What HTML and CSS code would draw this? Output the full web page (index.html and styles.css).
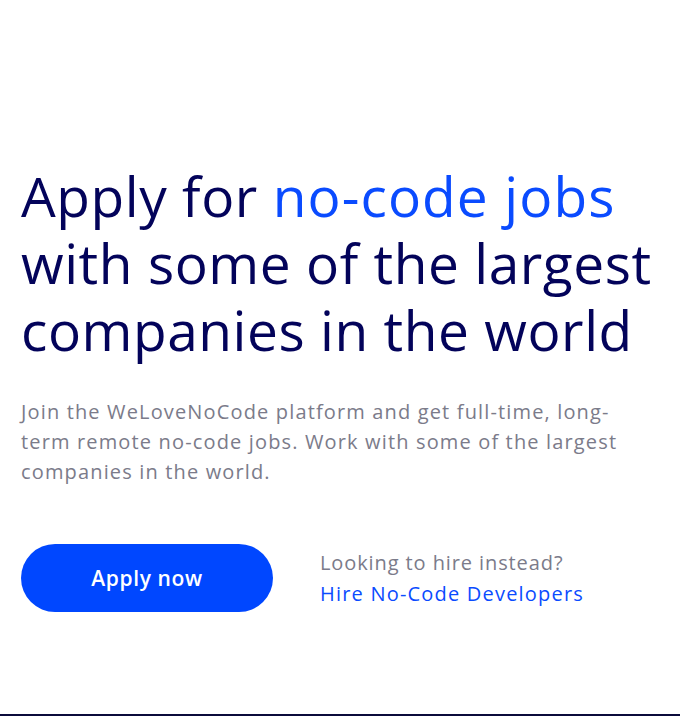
FILE: index.html
```html
<!DOCTYPE html>
<html lang="en">
<head>
<meta charset="utf-8">
<title>Apply for no-code jobs</title>
<link rel="stylesheet" href="styles.css">
</head>
<body>
<section class="hero">
  <h1 class="hero-title">Apply for <span class="accent">no-code jobs</span><br>with some of the largest<br>companies in the world</h1>
  <p class="hero-text">Join the WeLoveNoCode platform and get full-time, long-term remote no-code jobs. Work with some of the largest companies in the world.</p>
  <div class="hero-actions">
    <a class="btn-primary" href="#">Apply now</a>
    <div class="hire">
      <span class="hire-label">Looking to hire instead?</span>
      <a class="hire-link" href="#">Hire No-Code Developers</a>
    </div>
  </div>
</section>
<footer class="footer"></footer>
</body>
</html>
```
FILE: styles.css
```css
html, body {
  margin: 0;
  padding: 0;
  background: #ffffff;
}
body {
  font-family: "Open Sans", "Liberation Sans", sans-serif;
  height: 716px;
  display: flex;
  flex-direction: column;
}
.hero {
  flex: 1;
  padding: 162px 0 0 21px;
  box-sizing: border-box;
}
.hero-title {
  margin: 0;
  font-size: 55px;
  line-height: 67px;
  font-weight: 500;
  color: #03035a;
  letter-spacing: 0.55px;
  white-space: nowrap;
}
.accent {
  color: #0a4bff;
  letter-spacing: 1.1px;
}
.hero-text {
  margin: 34px 0 0 0;
  font-size: 20px;
  line-height: 30px;
  color: #7b7b8a;
  letter-spacing: 1.15px;
  max-width: 620px;
}
.hero-actions {
  margin-top: 57px;
  display: flex;
  align-items: center;
  gap: 47px;
}
.btn-primary {
  display: flex;
  align-items: center;
  justify-content: center;
  width: 252px;
  height: 68px;
  border-radius: 34px;
  background: #0047ff;
  color: #ffffff;
  text-decoration: none;
  font-size: 21px;
  font-weight: 600;
  letter-spacing: 0.6px;
}
.hire {
  display: flex;
  flex-direction: column;
  gap: 4px;
  font-size: 20px;
  line-height: 27px;
  letter-spacing: 0.9px;
}
.hire-label {
  color: #7b7b8a;
}
.hire-link {
  color: #0a4bff;
  text-decoration: none;
  letter-spacing: 1.2px;
}
.footer {
  height: 2px;
  background: #0b0b3b;
}
```
